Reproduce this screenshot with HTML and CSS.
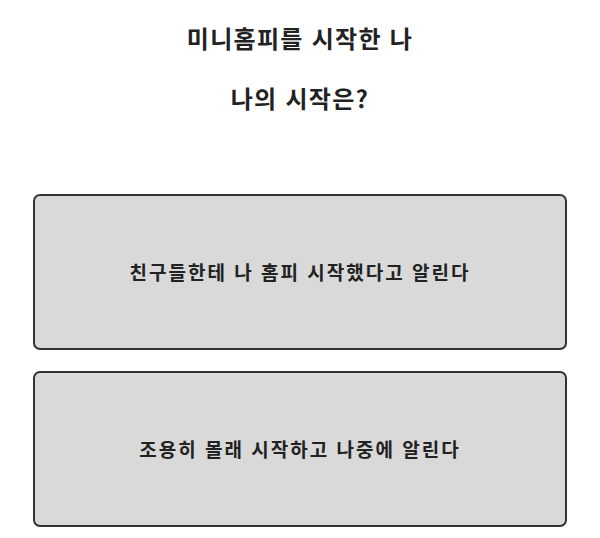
FILE: index.html
```html
<!DOCTYPE html>
<html lang="ko">
<head>
    <meta charset="UTF-8">
    <meta name="viewport" content="width=device-width, initial-scale=1.0">
    <title>미니홈피 테스트</title>
    <link rel="stylesheet" href="styles.css">
</head>
<body>
    <div class="quiz">
        <div class="question">
            <h2>미니홈피를 시작한 나</h2>
            <h2>나의 시작은?</h2>
        </div>

        <div class="answers">
            <button class="answer">친구들한테 나 홈피 시작했다고 알린다</button>
            <button class="answer">조용히 몰래 시작하고 나중에 알린다</button>
        </div>
    </div>
</body>
</html>
```

FILE: styles.css
```css
body {
    margin: 0;
    font-family: "Noto Sans CJK KR", "Noto Sans", sans-serif;
    background: #fff;
    color: #222;
}
.quiz {
    padding: 20px 33px 0;
}
.question {
    display: flex;
    flex-direction: column;
    align-items: center;
    gap: 24px;
}
.question h2 {
    margin: 0;
    font-size: 24px;
    line-height: 36px;
    font-weight: 700;
    letter-spacing: 1.3px;
}
.answers {
    margin-top: 78px;
    display: flex;
    flex-direction: column;
    gap: 21px;
}
.answer {
    height: 156px;
    padding-bottom: 2px;
    background: #d9d9d9;
    border: 2px solid #333;
    border-radius: 7px;
    font-family: inherit;
    font-size: 19px;
    font-weight: 700;
    letter-spacing: 2px;
    color: #222;
    cursor: pointer;
}
```
